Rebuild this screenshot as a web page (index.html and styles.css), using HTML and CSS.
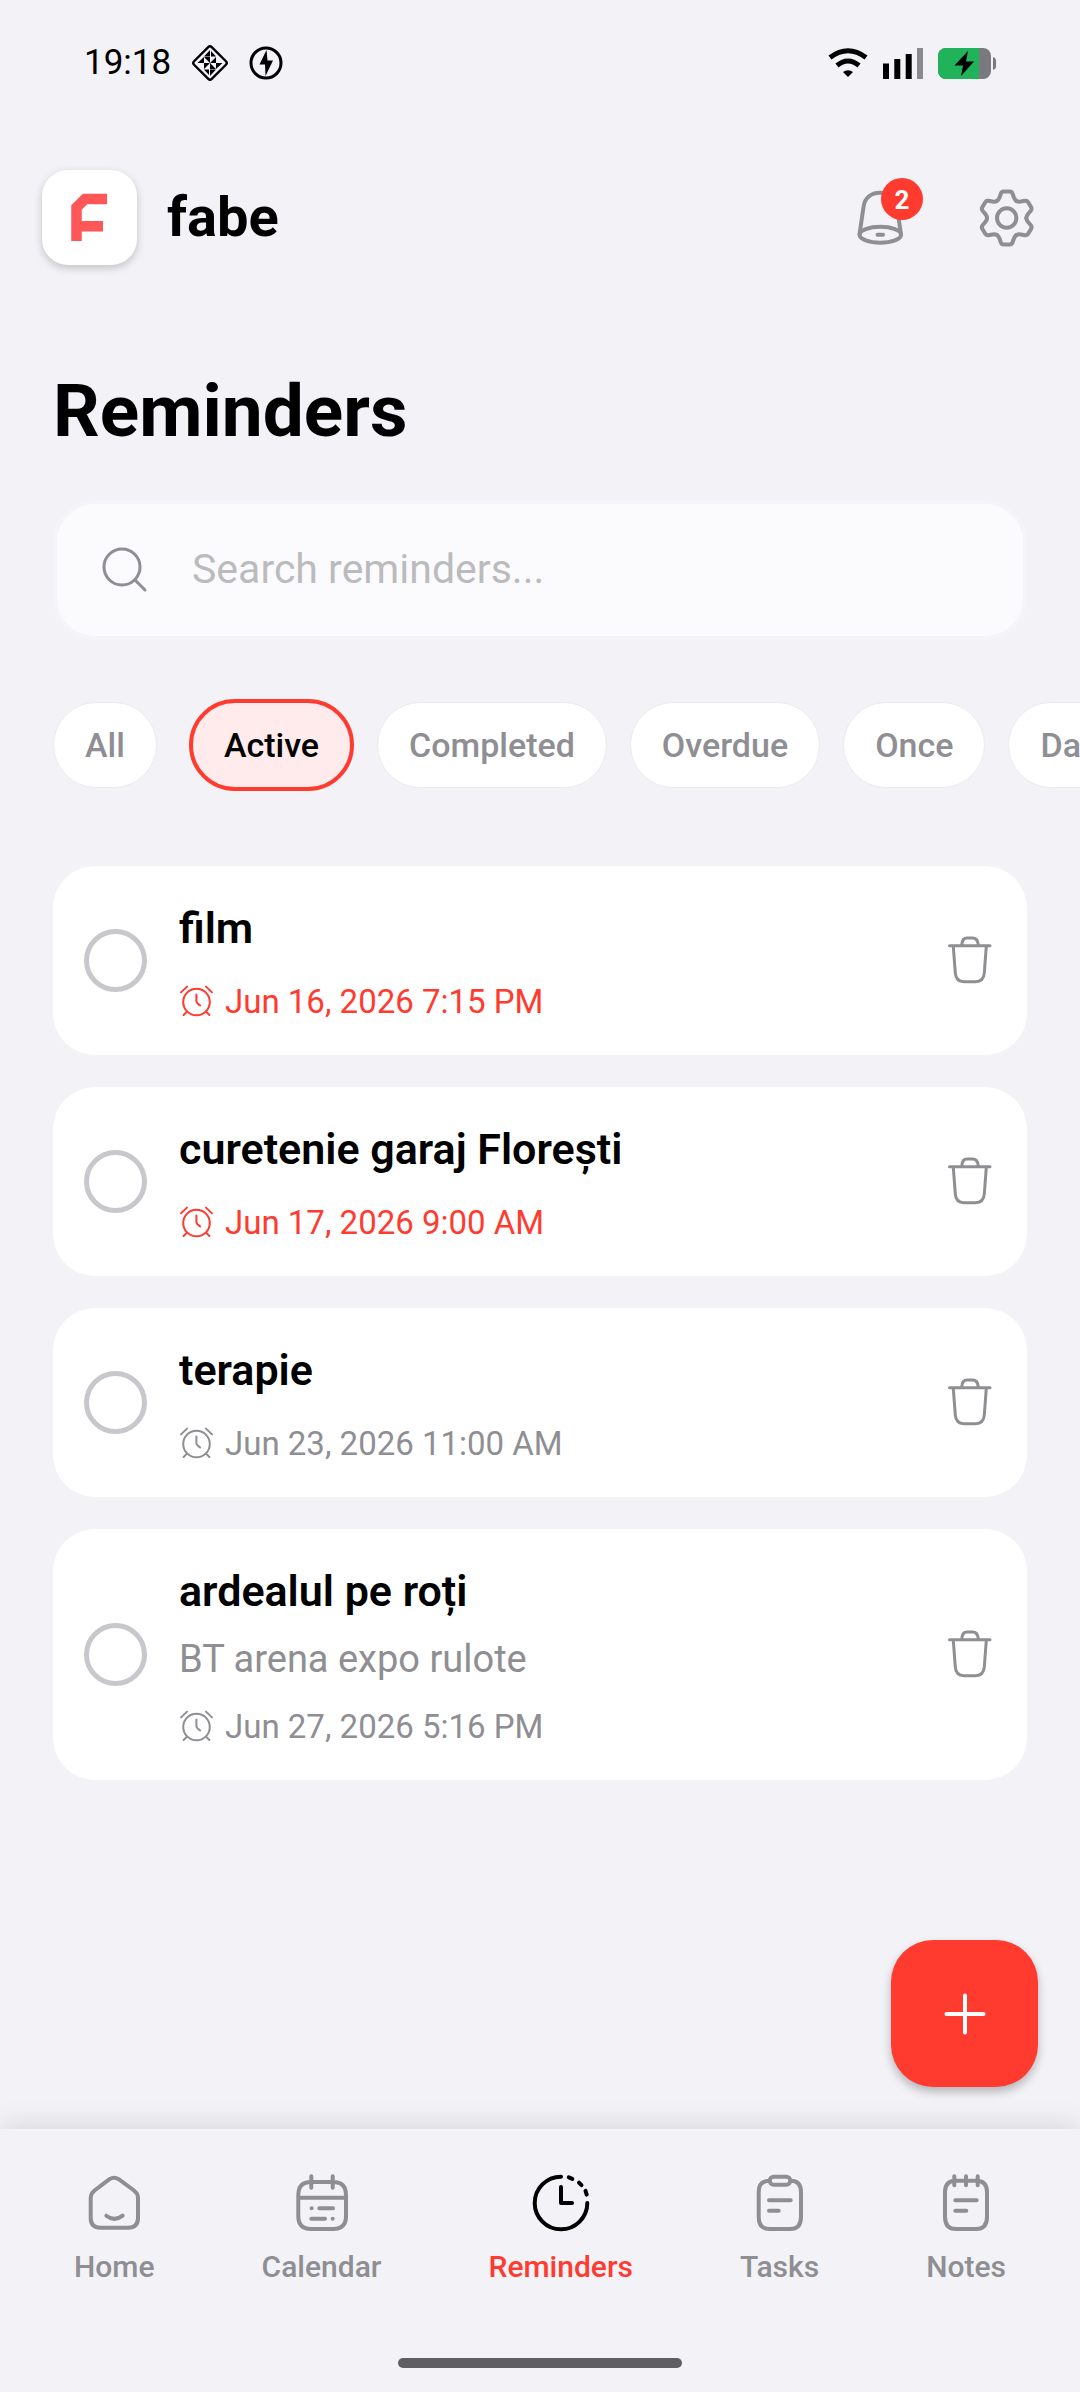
FILE: index.html
```html
<!DOCTYPE html>
<html lang="en">
<head>
    <meta charset="UTF-8">
    <meta name="viewport" content="width=device-width, initial-scale=1.0">
    <title>Reminders - fabe</title>
    <link rel="stylesheet" href="styles.css">
</head>
<body>
    <!-- shared icons -->
    <svg class="sprite" aria-hidden="true">
        <symbol id="icon-alarm" viewBox="0 0 36 36">
            <circle cx="17.5" cy="18" r="13.3"/>
            <path d="M2 8.4 8 2.6M27 2.6l6 5.8M4.6 31 8 27.6M30.4 31 27 27.6M17.4 10.5v6.8q0 1.6 3.8 4.2"/>
        </symbol>
        <symbol id="icon-trash" viewBox="0 0 53 53">
            <path d="M6.5 11.7H47M18.7 11C19 6.5 21 4 24 4h5.500C33 4 35 6.500 35.300 11M10.300 12.300 12.300 39c.4 5.500 3.500 8.700 8.700 8.700h11.500c5.200 0 8.400-3.200 8.800-8.700l2-26.700"/>
        </symbol>
    </svg>

    <div class="status-bar">
        <div class="status-left">
            <span class="status-time">19:18</span>
            <svg class="icon-diamond" viewBox="0 0 38 38">
                <rect x="6.500" y="6.500" width="25" height="25" rx="2.500" transform="rotate(45 19 19)" fill="none" stroke="#000" stroke-width="2.400"/>
                <path d="M19 6v6.500h-6zM19 32v-6.500h6zM6.500 19h6.500v-6zM31.500 19h-6.500v6zM13 13h6v6zM25 13v6h-6zM25 25h-6v-6zM13 25v-6h6zM20 7l5 5.500h-5zM18 31l-5-5.500h5z"/>
                <path d="M16 16h6v6h-6z" fill="#f2f2f7"/>
                <path d="M16 16h3v3zM22 22h-3v-3zM22 16v3h-3zM16 22v-3h3z"/>
            </svg>
            <svg class="icon-charge" viewBox="0 0 34 34">
                <circle cx="17" cy="17" r="15" fill="none" stroke="#000" stroke-width="3"/>
                <path d="M17.500 4 10.500 18.500h5.500L16.500 30l7.500-15.500h-5.500z"/>
            </svg>
        </div>
        <div class="status-right">
            <svg class="icon-wifi" viewBox="0 0 40 30">
                <path d="M2 9.500Q20-4 38 9.500M9 17.500Q20 8.500 31 17.500" fill="none" stroke="#000" stroke-width="5"/>
                <path d="M15 24Q20 20.500 25 24L20 29z"/>
            </svg>
            <svg class="icon-signal" viewBox="0 0 40 31">
                <path d="M0 15.500h6V31H0zM11.300 11h6v20h-6zM22.700 6h6v25h-6z"/>
                <path d="M34 0h6v31h-6z" fill="#8b8b8d"/>
            </svg>
            <svg class="icon-battery" viewBox="0 0 58 31">
                <rect width="53" height="31" rx="8" fill="#7a797d"/>
                <path d="M8 0h33v31H8a8 8 0 0 1-8-8V8a8 8 0 0 1 8-8z" fill="#20b35a"/>
                <path d="M55 9q3 1 3 3v7q0 2-3 3z" fill="#7a797d"/>
                <path d="M30 3 16.500 17.500H25L23 28 36 13.500H28z"/>
            </svg>
        </div>
    </div>

    <header class="app-header">
        <div class="brand">
            <div class="logo">
                <svg viewBox="0 0 95 95">
                    <path d="M34.500 71V37.500L43 29H65M34.500 56.300H61" fill="none" stroke="#ff5757" stroke-width="10.500"/>
                </svg>
            </div>
            <span class="brand-name">fabe</span>
        </div>
        <div class="header-actions">
            <button class="icon-button" type="button" aria-label="Notifications">
                <svg class="line-icon" viewBox="0 0 63 63">
                    <path d="M10.500 48.500 14.500 21C15.500 12 22 6.700 31 6.700S47 12 48 21l4 27.500M28.500 48.700h5.500"/>
                    <ellipse cx="31.300" cy="48.700" rx="20.700" ry="8"/>
                </svg>
                <span class="badge">2</span>
            </button>
            <button class="icon-button" type="button" aria-label="Settings">
                <svg class="line-icon" viewBox="0 0 63 63">
                    <circle cx="31.700" cy="32" r="9.700"/>
                    <g transform="translate(31.700 32)">
                        <path id="tooth" d="M-9.800-17C-8.300-17.900-7.800-19-7.200-20.500L-5.800-24.500Q-5-26.500-3-26.500H3Q5-26.500 5.800-24.500L7.200-20.500C7.800-19 8.300-17.900 9.800-17"/>
                        <use href="#tooth" transform="rotate(60)"/>
                        <use href="#tooth" transform="rotate(120)"/>
                        <use href="#tooth" transform="rotate(180)"/>
                        <use href="#tooth" transform="rotate(240)"/>
                        <use href="#tooth" transform="rotate(300)"/>
                    </g>
                </svg>
            </button>
        </div>
    </header>

    <main class="content">
        <h1 class="page-title">Reminders</h1>

        <label class="search-box">
            <svg class="search-icon" viewBox="0 0 46 46">
                <circle cx="20" cy="20" r="18"/>
                <path d="m33 33 10 10"/>
            </svg>
            <input class="search-input" type="text" placeholder="Search reminders..." aria-label="Search reminders">
        </label>

        <div class="filters">
            <button class="chip" type="button">All</button>
            <button class="chip active" type="button">Active</button>
            <button class="chip" type="button">Completed</button>
            <button class="chip" type="button">Overdue</button>
            <button class="chip" type="button">Once</button>
            <button class="chip" type="button">Daily</button>
        </div>

        <ul class="reminder-list">
            <li class="reminder">
                <input class="reminder-check" type="checkbox" id="reminder1">
                <div class="reminder-body">
                    <label class="reminder-title" for="reminder1">film</label>
                    <div class="reminder-date overdue">
                        <svg class="alarm-icon"><use href="#icon-alarm"/></svg>
                        <span>Jun 16, 2026 7:15 PM</span>
                    </div>
                </div>
                <button class="delete-button" type="button" aria-label="Delete"><svg><use href="#icon-trash"/></svg></button>
            </li>
            <li class="reminder">
                <input class="reminder-check" type="checkbox" id="reminder2">
                <div class="reminder-body">
                    <label class="reminder-title" for="reminder2">curetenie garaj Florești</label>
                    <div class="reminder-date overdue">
                        <svg class="alarm-icon"><use href="#icon-alarm"/></svg>
                        <span>Jun 17, 2026 9:00 AM</span>
                    </div>
                </div>
                <button class="delete-button" type="button" aria-label="Delete"><svg><use href="#icon-trash"/></svg></button>
            </li>
            <li class="reminder">
                <input class="reminder-check" type="checkbox" id="reminder3">
                <div class="reminder-body">
                    <label class="reminder-title" for="reminder3">terapie</label>
                    <div class="reminder-date">
                        <svg class="alarm-icon"><use href="#icon-alarm"/></svg>
                        <span>Jun 23, 2026 11:00 AM</span>
                    </div>
                </div>
                <button class="delete-button" type="button" aria-label="Delete"><svg><use href="#icon-trash"/></svg></button>
            </li>
            <li class="reminder">
                <input class="reminder-check" type="checkbox" id="reminder4">
                <div class="reminder-body">
                    <label class="reminder-title" for="reminder4">ardealul pe roți</label>
                    <p class="reminder-note">BT arena expo rulote</p>
                    <div class="reminder-date">
                        <svg class="alarm-icon"><use href="#icon-alarm"/></svg>
                        <span>Jun 27, 2026 5:16 PM</span>
                    </div>
                </div>
                <button class="delete-button" type="button" aria-label="Delete"><svg><use href="#icon-trash"/></svg></button>
            </li>
        </ul>

        <button class="add-button" type="button" aria-label="Add reminder">
            <svg viewBox="0 0 42 42"><path d="M21 2.500v37M2.500 21h37"/></svg>
        </button>
    </main>

    <nav class="bottom-nav">
        <div class="nav-items">
            <a class="nav-item" href="#">
                <svg class="line-icon" viewBox="0 0 62 62">
                    <path d="M26.500 7.200Q31 4.200 35.700 7.200L51 18.500Q55 21.500 55 26V46Q55 55.700 45 55.700H17.500Q7.700 55.700 7.700 46V26Q7.700 21.500 11.500 18.500ZM23.300 43.700Q31.300 50 39.700 43.700"/>
                </svg>
                <span>Home</span>
            </a>
            <a class="nav-item" href="#">
                <svg class="line-icon" viewBox="0 0 62 62">
                    <path d="M7.300 25V23Q7.300 10 20 10H42Q55 10 55 23V44Q55 57 42 57H20Q7.300 57 7.300 44ZM7.300 25.700H55M20.300 4.300V15.700M41.700 4.300V15.700M20.600 36.300h.1M28.300 36.300H42M20.300 46.700H34M41.600 46.700h.1"/>
                </svg>
                <span>Calendar</span>
            </a>
            <a class="nav-item current" href="#" aria-current="page">
                <svg class="line-icon" viewBox="0 0 62 62">
                    <path d="M57.300 31A26.300 26.300 0 1 1 31 4.700M38.800 5.400 42.300 6.900M49 10.700 51.500 13.200M55.500 18.800 56.700 22.700M31 15V31H42"/>
                </svg>
                <span>Reminders</span>
            </a>
            <a class="nav-item" href="#">
                <svg class="line-icon" viewBox="0 0 62 62">
                    <path d="M20.500 8.700Q9.700 8.700 9.700 20V45Q9.700 57 20.500 57H41Q52 57 52 45V20Q52 8.700 41.500 8.700M20 28.300H41.700M20 38.700H29.700"/>
                    <rect x="20.700" y="4.700" width="20.600" height="8" rx="4"/>
                </svg>
                <span>Tasks</span>
            </a>
            <a class="nav-item" href="#">
                <svg class="line-icon" viewBox="0 0 62 62">
                    <path d="M21 8.700H41Q52 8.700 52 20V45Q52 57 41 57H21Q10 57 10 45V20Q10 8.700 21 8.700ZM19.300 4.300V13.300M31 4.300V13.300M42.700 4.300V13.300M20.300 28.300H41.700M20.300 38.700H31.300"/>
                </svg>
                <span>Notes</span>
            </a>
        </div>
        <div class="home-indicator"></div>
    </nav>
</body>
</html>
```
FILE: styles.css
```css
* {
    box-sizing: border-box;
}

body {
    display: flex;
    flex-direction: column;
    min-height: 100vh;
    margin: 0;
    background-color: #f2f2f7;
    color: #000;
    font-family: Roboto, sans-serif;
}

button {
    padding: 0;
    border: none;
    background: none;
    font-family: inherit;
    cursor: pointer;
}

svg {
    display: block;
}

.sprite {
    position: absolute;
    width: 0;
    height: 0;
}

.line-icon {
    fill: none;
    stroke: #8e8e93;
    stroke-width: 4;
    stroke-linecap: round;
    stroke-linejoin: round;
}

/* Status bar */
.status-bar {
    display: flex;
    justify-content: space-between;
    align-items: center;
    height: 126px;
    padding: 0 84px;
}

.status-left,
.status-right {
    display: flex;
    align-items: center;
}

.status-left {
    gap: 20px;
}

.status-right {
    gap: 15px;
}

.status-time {
    font-size: 35px;
    line-height: 44px;
}

.icon-diamond {
    width: 38px;
    height: 38px;
}

.icon-charge {
    width: 34px;
    height: 34px;
}

.icon-wifi {
    width: 40px;
    height: 30px;
}

.icon-signal {
    width: 40px;
    height: 31px;
}

.icon-battery {
    width: 58px;
    height: 31px;
}

/* Header */
.app-header {
    display: flex;
    justify-content: space-between;
    align-items: center;
    padding: 44px 42px 0;
}

.brand {
    display: flex;
    align-items: center;
    gap: 30px;
}

.logo {
    width: 95px;
    height: 95px;
    border-radius: 26px;
    background-color: #fff;
    box-shadow: 0 3px 8px rgba(0, 0, 0, 0.2);
}

.brand-name {
    padding-bottom: 2px;
    font-size: 56px;
    font-weight: 700;
    line-height: 66px;
}

.header-actions {
    display: flex;
    gap: 63px;
}

.icon-button {
    position: relative;
    width: 63px;
    height: 63px;
}

.badge {
    position: absolute;
    top: -8px;
    right: -11px;
    width: 42px;
    height: 42px;
    border-radius: 50%;
    background-color: #ff3b30;
    color: #fff;
    font-size: 26px;
    font-weight: 700;
    line-height: 44px;
    text-align: center;
}

/* Page content */
.content {
    position: relative;
    flex: 1;
    padding: 102px 53px 0;
}

.page-title {
    margin: 0 0 45px;
    font-size: 73px;
    font-weight: 700;
    line-height: 88px;
}

.search-box {
    display: flex;
    align-items: center;
    gap: 44px;
    height: 140px;
    padding: 0 45px;
    border: 4px solid #f5f5f9;
    border-radius: 42px;
    background-color: #fbfbfd;
}

.search-icon {
    flex: none;
    width: 46px;
    height: 46px;
    fill: none;
    stroke: #8e8e93;
    stroke-width: 3;
    stroke-linecap: round;
}

.search-input {
    flex: 1;
    min-width: 0;
    padding: 0 0 2px;
    border: none;
    outline: none;
    background: none;
    color: #000;
    font-family: inherit;
    font-size: 41px;
    line-height: 48px;
}

.search-input::placeholder {
    color: #bbbbbd;
    opacity: 1;
}

/* Filter chips, scroll sideways */
.filters {
    display: flex;
    align-items: center;
    gap: 23px;
    margin: 59px -53px 75px;
    padding: 0 53px;
    overflow-x: auto;
    scrollbar-width: none;
}

.chip {
    flex: none;
    height: 86px;
    padding: 0 31px;
    border: 1px solid #ececee;
    border-radius: 43px;
    background-color: #fff;
    color: #8e8e93;
    font-size: 34px;
    font-weight: 500;
    line-height: 40px;
}

.chip.active {
    height: 92px;
    margin-left: 9px;
    border: 4px solid #ff3b30;
    border-radius: 46px;
    background-color: #ffebec;
    color: #000;
}

/* Reminder cards */
.reminder-list {
    display: flex;
    flex-direction: column;
    gap: 32px;
    margin: 0;
    padding: 0;
    list-style: none;
}

.reminder {
    display: flex;
    align-items: center;
    gap: 32px;
    padding: 32px 31px 33px;
    border-radius: 42px;
    background-color: #fff;
}

.reminder-check {
    flex: none;
    width: 63px;
    height: 63px;
    margin: 0;
    appearance: none;
    border: 5px solid #c7c7cc;
    border-radius: 50%;
}

.reminder-check:checked {
    border-color: #ff3b30;
    background-color: #ff3b30;
}

.reminder-body {
    flex: 1;
    min-width: 0;
}

.reminder-title {
    display: block;
    font-size: 43px;
    font-weight: 600;
    line-height: 60px;
}

.reminder-note {
    margin: 14px 0 0;
    color: #8e8e93;
    font-size: 38px;
    line-height: 48px;
}

.reminder-date {
    display: flex;
    align-items: center;
    gap: 10px;
    margin-top: 24px;
    color: #8e8e93;
    font-size: 33px;
    line-height: 40px;
}

.reminder-date.overdue {
    color: #ff3b30;
}

.alarm-icon {
    width: 36px;
    height: 36px;
    fill: none;
    stroke: currentColor;
    stroke-width: 2;
    stroke-linecap: round;
}

.delete-button svg {
    width: 53px;
    height: 53px;
    fill: none;
    stroke: #8e8e93;
    stroke-width: 3;
    stroke-linecap: round;
    stroke-linejoin: round;
}

.add-button {
    position: absolute;
    right: 42px;
    bottom: 42px;
    display: flex;
    align-items: center;
    justify-content: center;
    width: 147px;
    height: 147px;
    border-radius: 42px;
    background-color: #ff3b30;
    box-shadow: 0 5px 10px rgba(0, 0, 0, 0.25);
}

.add-button svg {
    width: 42px;
    height: 42px;
    fill: none;
    stroke: #fff;
    stroke-width: 4;
    stroke-linecap: round;
}

/* Bottom navigation */
.bottom-nav {
    padding: 43px 74px 24px;
    background-color: #f2f2f7;
    box-shadow: 0 -4px 26px rgba(0, 0, 0, 0.11);
}

.nav-items {
    display: flex;
    justify-content: space-between;
}

.nav-item {
    display: flex;
    flex-direction: column;
    align-items: center;
    gap: 15px;
    color: #8e8e93;
    font-size: 30px;
    font-weight: 500;
    line-height: 36px;
    text-decoration: none;
}

.nav-item svg {
    width: 62px;
    height: 62px;
}

.nav-item.current {
    color: #ff3b30;
}

.nav-item.current svg {
    stroke: #000;
}

.home-indicator {
    width: 284px;
    height: 10px;
    margin: 73px auto 0;
    border-radius: 5px;
    background-color: #5f5f61;
}
```
